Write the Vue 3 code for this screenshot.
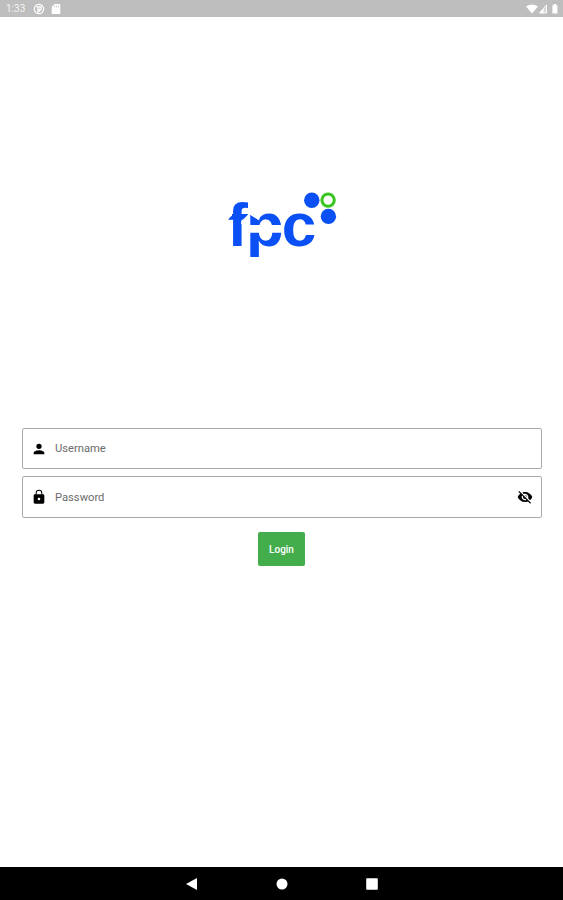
<script setup>
import { ref } from 'vue'

const username = ref('')
const password = ref('')
const hidden = ref(true)
</script>

<template>
  <div class="screen">
    <header class="status">
      <span class="time">1:33</span>
      <svg class="app-icon" viewBox="0 0 12 12">
        <circle cx="6" cy="6" r="4.700" fill="none" stroke="#fff" stroke-width="1.200" />
        <path d="M3.500 4h4.600v2.400L5 9V6.500M4 6.200h3" fill="none" stroke="#fff" stroke-width="1.300" />
      </svg>
      <svg class="card-icon" viewBox="0 0 10 10">
        <path d="M3.500 0H8.500Q9.300 0 9.300.8V9.200Q9.300 10 8.500 10H1.500Q.7 10 .7 9.200V3Z" fill="#fff" />
        <path d="M3.700 1.600v1.700M5.500 1.600v1.700M7.300 1.600v1.700" stroke="#bdbdbd" stroke-width=".7" />
      </svg>
      <svg class="signals" viewBox="0 0 34 12">
        <path d="M0 3.600Q6 -.7 12 3.600L6 10.600Z" fill="#fff" />
        <path d="M13.500 10L20.500 2V10Z" fill="#fff" fill-opacity=".4" stroke="#fff" stroke-width=".9" />
        <path d="M13.500 10L17.500 5.500V10Z" fill="#fff" />
        <path d="M26.400 2.200H27.600V1H30.200V2.200H31.400V10.500H26.400Z" fill="#fff" />
      </svg>
    </header>

    <main class="content">
      <svg class="logo" viewBox="225 188 116 74" role="img" aria-label="fpc">
        <text class="word" x="227.200 246 281.700" y="246">fpc</text>
        <g fill="#fff">
          <path d="M226 210H232V215.500L226 221.500Z" />
          <path d="M241.200 221.500L248.500 214V224H241.200Z" />
          <path d="M248 225H283V232.800H248Z" />
          <path d="M248 211H259.200V220.500L249.500 214.500H248Z" />
          <path d="M248 257H262V262H248Z" />
          <path d="M304 225.200H318V233H304Z" />
        </g>
        <circle cx="311.800" cy="200.300" r="7.700" fill="#0b50f5" />
        <circle cx="328.400" cy="216.400" r="7.700" fill="#0b50f5" />
        <circle cx="328.100" cy="200.100" r="6.200" fill="none" stroke="#35c51b" stroke-width="3" />
      </svg>

      <form class="form" @submit.prevent>
        <label class="field">
          <svg class="icon" viewBox="0 0 24 24">
            <path d="M12 12a4 4 0 1 0 0-8 4 4 0 0 0 0 8zm0 2c-2.700 0-8 1.300-8 4v2h16v-2c0-2.700-5.300-4-8-4z" />
          </svg>
          <input v-model="username" type="text" placeholder="Username" />
        </label>
        <label class="field">
          <svg class="icon" viewBox="0 0 24 24">
            <path fill-rule="evenodd" d="M18 8h-1V6A5 5 0 0 0 7 6v2H6a2 2 0 0 0-2 2v10a2 2 0 0 0 2 2h12a2 2 0 0 0 2-2V10a2 2 0 0 0-2-2zM12 17a2 2 0 1 1 0-4 2 2 0 0 1 0 4zM8.500 8V6a3.500 3.500 0 0 1 7 0v2z" />
          </svg>
          <input v-model="password" :type="hidden ? 'password' : 'text'" placeholder="Password" />
          <button class="toggle" type="button" @click="hidden = !hidden">
            <svg viewBox="0 0 24 24">
              <path d="M12 7c2.760 0 5 2.240 5 5 0 .65-.13 1.260-.36 1.830l2.920 2.920c1.510-1.260 2.700-2.890 3.430-4.750-1.730-4.390-6-7.500-11-7.500-1.400 0-2.740.25-3.980.7l2.160 2.160C10.740 7.130 11.350 7 12 7zM2 4.270l2.280 2.280.46.46C3.080 8.300 1.780 10.020 1 12c1.730 4.390 6 7.500 11 7.500 1.550 0 3.030-.3 4.380-.84l.42.42L19.730 22 21 20.730 3.270 3 2 4.270zM7.530 9.800l1.550 1.550c-.05.21-.08.43-.08.65 0 1.660 1.340 3 3 3 .22 0 .44-.03.65-.08l1.550 1.550c-.67.33-1.410.53-2.200.53-2.760 0-5-2.240-5-5 0-.79.2-1.530.53-2.200zm4.310-.78 3.150 3.150.02-.16c0-1.660-1.340-3-3-3l-.17.01z" />
            </svg>
          </button>
        </label>
        <button class="login" type="submit">Login</button>
      </form>
    </main>

    <nav class="nav">
      <svg viewBox="0 0 12 14"><path d="M0 7L11 1V13Z" /></svg>
      <svg viewBox="0 0 12 14"><circle cx="6" cy="7" r="5.500" /></svg>
      <svg viewBox="0 0 12 14"><rect x=".2" y="1.200" width="11.600" height="11.600" rx=".8" /></svg>
    </nav>
  </div>
</template>

<style>
body {
  margin: 0;
  background: #fff;
}
</style>

<style scoped>
.screen {
  display: flex;
  flex-direction: column;
  height: 900px;
  background: #fff;
  font-family: Roboto, sans-serif;
}

.status {
  display: flex;
  align-items: center;
  box-sizing: border-box;
  height: 17px;
  padding: 0 3px 0 6px;
  background: #bebebe;
  color: #fff;
}

.time {
  width: 27px;
  font-size: 10px;
  line-height: 18px;
  opacity: 0.85;
}

.app-icon {
  width: 12px;
  height: 12px;
}

.card-icon {
  width: 10px;
  height: 10px;
  margin-left: 6px;
}

.signals {
  width: 34px;
  height: 12px;
  margin-left: auto;
}

.content {
  display: flex;
  flex: 1;
  flex-direction: column;
  align-items: center;
  padding: 171px 21px 0 22px;
}

.logo {
  width: 116px;
  height: 74px;
  margin-left: 2px;
}

.word {
  fill: #0b50f5;
  font: bold 62px "Liberation Sans", sans-serif;
}

.form {
  display: flex;
  flex-direction: column;
  align-items: center;
  width: 100%;
  margin-top: 166px;
}

.field {
  display: flex;
  align-items: center;
  box-sizing: border-box;
  width: 100%;
  height: 41px;
  padding: 0 8px;
  border: 1px solid #aaa;
  border-radius: 2px;
}

.field + .field {
  height: 42px;
  margin-top: 7px;
}

.icon {
  flex: none;
  width: 16px;
  height: 16px;
}

input {
  flex: 1;
  min-width: 0;
  margin: 0 0 0 8px;
  padding: 0;
  border: 0;
  outline: 0;
  background: none;
  font: 11.2px Roboto, sans-serif;
}

input::placeholder {
  color: #6c6c6c;
  opacity: 1;
}

.toggle {
  width: 16px;
  height: 16px;
  padding: 0;
  border: 0;
  background: none;
}

.toggle svg {
  display: block;
  width: 16px;
  height: 16px;
}

.login {
  width: 47px;
  height: 34px;
  margin: 14px 1px 0 0;
  padding: 0;
  border: 0;
  border-radius: 2px;
  background: #43ad4b;
  color: #fff;
  font: 500 10px Roboto, sans-serif;
}

.nav {
  display: flex;
  align-items: center;
  justify-content: center;
  gap: 78px;
  height: 33px;
  background: #000;
}

.nav svg {
  width: 12px;
  height: 14px;
  fill: #fff;
}
</style>
